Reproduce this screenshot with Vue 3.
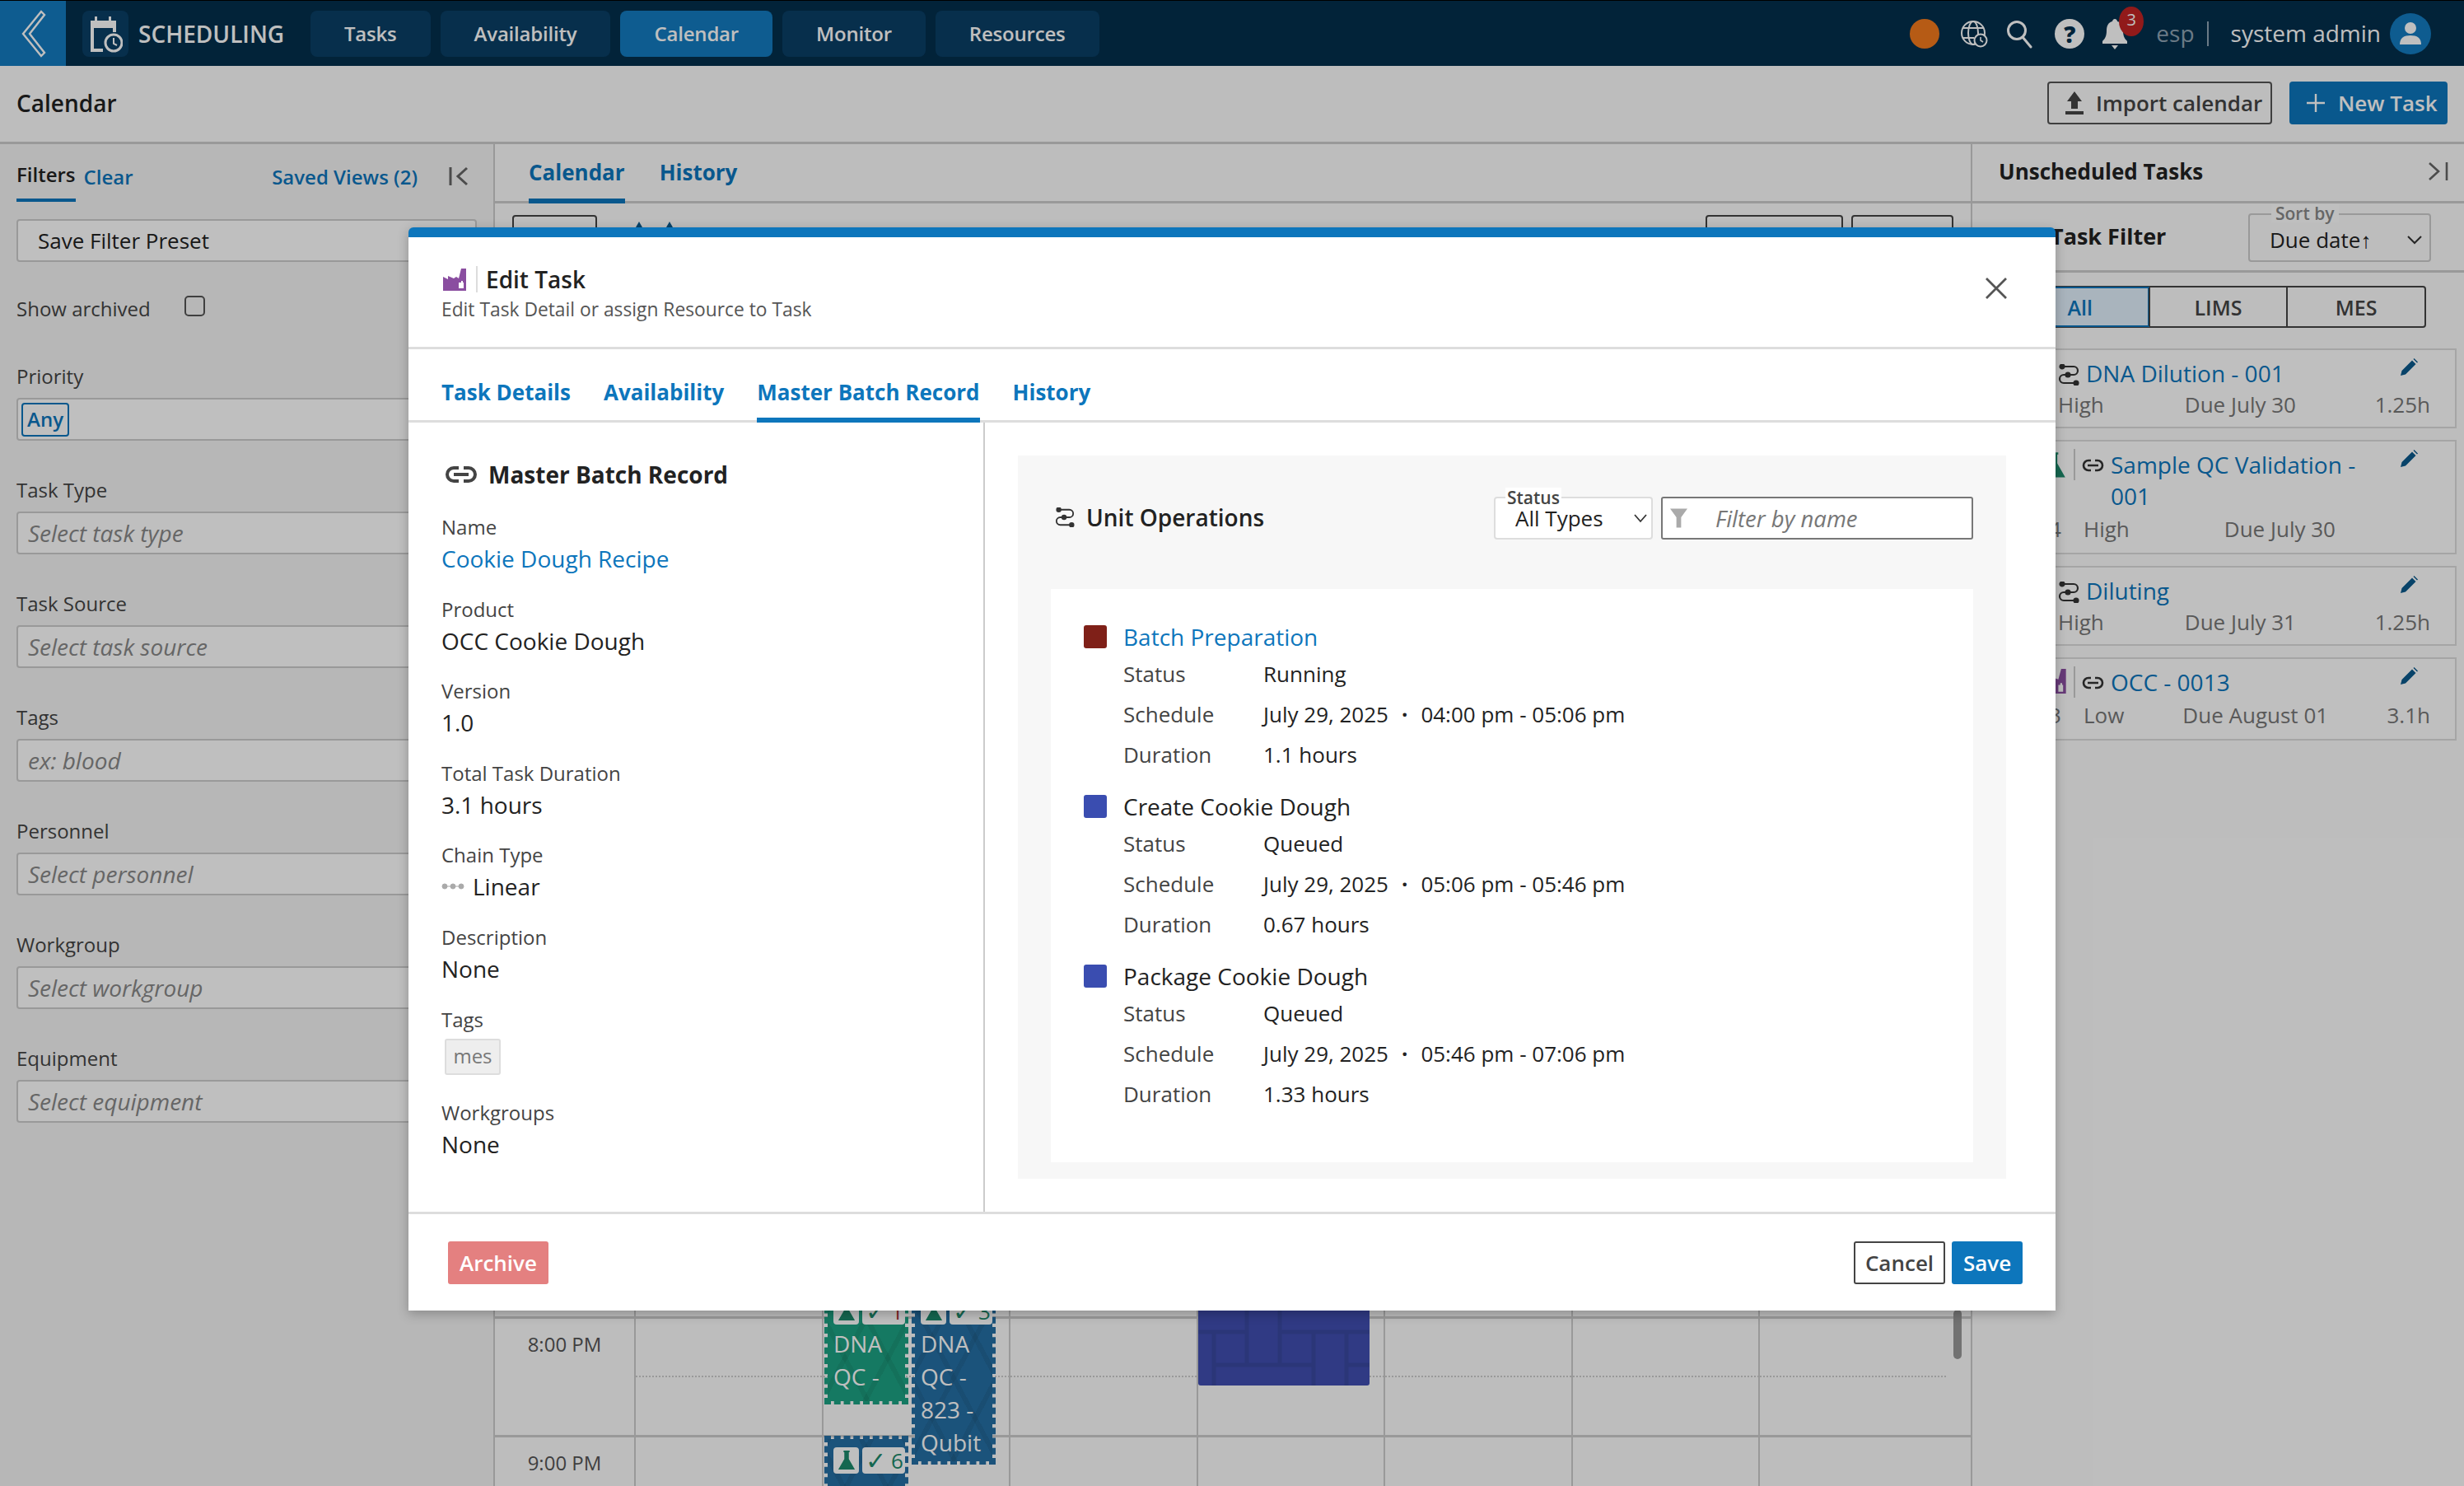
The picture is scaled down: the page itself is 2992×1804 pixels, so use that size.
<template>
  <div class="page">
    <!-- Top bar -->
    <header class="topbar">
      <div class="back">
        <svg width="32" height="58" viewBox="0 0 32 58" fill="none" stroke="#fff" stroke-width="2.4"><path d="M26 2 L4 29 L26 56 L30 52 L12 29 L30 6 Z" /></svg>
      </div>
      <div class="app-tile">
        <svg width="42" height="46" viewBox="0 0 42 46"><path fill="#fff" d="M3 7h5V2h3v5h14V2h3v5h6v14h-4v-5H7v25h11v4H3z" /><circle cx="31" cy="34" r="10" fill="none" stroke="#fff" stroke-width="3" /><path d="M31 28v7l4 2" fill="none" stroke="#fff" stroke-width="2" /></svg>
      </div>
      <div class="app-name">SCHEDULING</div>
      <nav class="nav">
        <div v-for="n in navItems" :key="n" class="nav-item" :class="{ active: n === 'Calendar' }">{{ n }}</div>
      </nav>
      <div class="top-right">
        <span class="status-dot" />
        <svg class="ti" width="34" height="36" viewBox="0 0 34 36" fill="none" stroke="#fff" stroke-width="2"><circle cx="16" cy="17" r="14" /><ellipse cx="16" cy="17" rx="6" ry="14" /><path d="M3 11h26M3 23h14" /><circle cx="25" cy="26" r="7.5" fill="#032f4d" /><path d="M25 22v4l3 2" stroke-width="1.6" /></svg>
        <svg class="ti search" width="34" height="36" viewBox="0 0 34 36" fill="none" stroke="#fff" stroke-width="3"><circle cx="14" cy="14" r="10.5" /><path d="M21 22l10 12" stroke-linecap="round" /></svg>
        <span class="help">?</span>
        <div class="bell">
          <svg width="34" height="38" viewBox="0 0 34 38" fill="#fff"><path d="M17 1c2 0 3 2 3 3 5 1 7 6 7 11 0 7 2 10 5 13v3H2v-3c3-3 5-6 5-13 0-5 2-10 7-11 0-1 1-3 3-3z" /><path d="M13 33h8l-4 5z" /></svg>
          <span class="badge">3</span>
        </div>
        <span class="lang">esp</span>
        <span class="sep" />
        <span class="user">system admin</span>
        <span class="avatar">
          <svg width="28" height="30" viewBox="0 0 28 30" fill="#fff"><circle cx="14" cy="8" r="7" /><path d="M1 28c0-8 5-11 13-11s13 3 13 11z" /></svg>
        </span>
      </div>
    </header>

    <!-- Page title row -->
    <div class="subhead">
      <div class="page-title">Calendar</div>
      <div class="sub-actions">
        <button class="btn-outline">
          <svg width="24" height="30" viewBox="0 0 24 30" fill="#444"><path d="M12 1l9 12h-5v9H8v-9H3z" /><path d="M1 25h22v4H1z" /></svg>
          Import calendar
        </button>
        <button class="btn-primary">
          <svg width="24" height="24" viewBox="0 0 24 24" stroke="#fff" stroke-width="2.4"><path d="M12 1v22M1 12h22" /></svg>
          New Task
        </button>
      </div>
    </div>

    <div class="main">
      <!-- Filters -->
      <aside class="filters">
        <div class="filters-head">
          <span class="f-title">Filters</span>
          <span class="link f-clear">Clear</span>
          <span class="link f-saved">Saved Views (2)</span>
          <svg width="24" height="24" viewBox="0 0 24 24" fill="none" stroke="#666" stroke-width="3"><path d="M2 1v22M22 2L11 12l11 10" /></svg>
        </div>
        <div class="input preset">Save Filter Preset</div>
        <div class="archived">
          <span>Show archived</span>
          <span class="checkbox" />
        </div>
        <div class="f-label first">Priority</div>
        <div class="input tagbox"><span class="any">Any</span></div>
        <template v-for="f in filterFields" :key="f.label">
          <div class="f-label">{{ f.label }}</div>
          <div class="input ph">{{ f.ph }}</div>
        </template>
      </aside>

      <!-- Calendar -->
      <section class="center">
        <div class="tabs-row">
          <div class="c-tab on">Calendar</div>
          <div class="c-tab">History</div>
        </div>
        <div class="cal-toolbar">
          <span class="tb-btn today" />
          <span class="tb-arrows">
            <svg width="16" height="14" viewBox="0 0 16 14" fill="#0b5a8d"><path d="M8 0l8 14H0z" /></svg>
            <svg width="16" height="14" viewBox="0 0 16 14" fill="#0b5a8d"><path d="M8 0l8 14H0z" /></svg>
          </span>
          <span class="tb-spacer" />
          <span class="tb-btn wide" />
          <span class="tb-btn mid" />
        </div>
        <div class="cal-body">
          <div v-for="(h, i) in hours" :key="h" class="hour-row" :class="{ short: i === hours.length - 1 }">
            <div class="hour-label">{{ h }}</div>
            <div v-for="c in 7" :key="c" class="hour-cell" />
          </div>
          <!-- events lie over the grid -->
          <div v-for="ev in events" :key="ev.id" class="event" :class="ev.cls" :style="{ left: ev.left + 'px', bottom: ev.bottom + 'px', height: ev.height + 'px' }">
            <div class="chips">
              <span class="chip small"><svg width="22" height="26" viewBox="0 0 24 28" fill="#1c8a6b"><path d="M8 1h8v2h-1v9l8 14H1l8-14V3H8z" /></svg></span>
              <span class="chip grow"><i class="ok">✓</i><i class="ok-num" :class="{ red: ev.red }">{{ ev.num }}</i></span>
            </div>
            <div class="ev-text"><div v-for="l in ev.lines" :key="l">{{ l }}</div></div>
          </div>
          <div class="block">
            <svg width="208" height="92" viewBox="0 0 208 92" fill="none" stroke="#3a48a0" stroke-width="5"><path d="M0 27h59M99 27h109M19 67h121M180 67h28" /><path d="M59 0v67M99 0v67M19 27v65M140 27v65M180 27v65" /></svg>
          </div>
          <div class="scrollbar" />
        </div>
      </section>

      <!-- Unscheduled -->
      <aside class="unsched">
        <div class="u-head">
          <span>Unscheduled Tasks</span>
          <svg width="26" height="24" viewBox="0 0 26 24" fill="none" stroke="#666" stroke-width="2.6"><path d="M3 2l11 10L3 22M24 1v22" /></svg>
        </div>
        <div class="u-filter">
          <span class="u-filter-title">Task Filter</span>
          <div class="sort">
            <span class="sort-label">Sort by</span>
            <span>Due date↑</span>
            <svg width="20" height="12" viewBox="0 0 20 12" fill="none" stroke="#333" stroke-width="2"><path d="M2 2l8 8 8-8" /></svg>
          </div>
        </div>
        <div class="seg">
          <span class="seg-item on">All</span>
          <span class="seg-item">LIMS</span>
          <span class="seg-item">MES</span>
        </div>
        <div class="cards">
          <div class="u-card plain">
            <div class="u-top">
              <svg class="ops" width="26" height="26" viewBox="0 0 26 26" fill="none" stroke="#333" stroke-width="2.2"><path d="M6 3h13a4.5 4.5 0 0 1 0 10H7a4.5 4.5 0 0 0 0 10h13" /><circle cx="5" cy="3" r="2.5" fill="#333" /><circle cx="12" cy="13" r="2.5" fill="#333" /><circle cx="22" cy="23" r="2.5" fill="#333" /></svg>
              <span class="u-name">DNA Dilution - 001</span>
            </div>
            <div class="u-meta"><span>High</span><span class="due">Due July 30</span><span class="hrs">1.25h</span></div>
            <svg class="pencil" width="22" height="22" viewBox="0 0 22 22" fill="#0b5a8d"><path d="M1 21l1.5-6L15 2.5l4.5 4.5L7 19.5zM16.5 1l1-1 4.5 4.5-1 1z" /></svg>
          </div>
          <div class="u-card lead c2">
            <div class="u-top">
              <svg class="lead-ico" width="29" height="34" viewBox="0 0 24 28" fill="#1c8a6b"><path d="M8 1h8v2h-1v9l8 14H1l8-14V3H8z" /></svg>
              <span class="vbar" />
              <svg class="chain" width="27" height="16" viewBox="0 0 27 16" fill="none" stroke="#333" stroke-width="2.6"><path d="M11 2H8a6 6 0 0 0 0 12h3M16 2h3a6 6 0 0 1 0 12h-3M7 8h13" /></svg>
              <span class="u-name">Sample QC Validation -<br />001</span>
            </div>
            <div class="u-meta"><span class="u-num">4</span><span>High</span><span class="due due2">Due July 30</span></div>
            <svg class="pencil" width="22" height="22" viewBox="0 0 22 22" fill="#0b5a8d"><path d="M1 21l1.5-6L15 2.5l4.5 4.5L7 19.5zM16.5 1l1-1 4.5 4.5-1 1z" /></svg>
          </div>
          <div class="u-card plain">
            <div class="u-top">
              <svg class="ops" width="26" height="26" viewBox="0 0 26 26" fill="none" stroke="#333" stroke-width="2.2"><path d="M6 3h13a4.5 4.5 0 0 1 0 10H7a4.5 4.5 0 0 0 0 10h13" /><circle cx="5" cy="3" r="2.5" fill="#333" /><circle cx="12" cy="13" r="2.5" fill="#333" /><circle cx="22" cy="23" r="2.5" fill="#333" /></svg>
              <span class="u-name">Diluting</span>
            </div>
            <div class="u-meta"><span>High</span><span class="due">Due July 31</span><span class="hrs">1.25h</span></div>
            <svg class="pencil" width="22" height="22" viewBox="0 0 22 22" fill="#0b5a8d"><path d="M1 21l1.5-6L15 2.5l4.5 4.5L7 19.5zM16.5 1l1-1 4.5 4.5-1 1z" /></svg>
          </div>
          <div class="u-card lead c4">
            <div class="u-top">
              <svg class="lead-ico" width="33" height="30" viewBox="0 0 28 26"><path fill="#8a4ea0" d="M0 26V9l6 3V8l6 3 2-2 6 2 3-11h5v26z" /><path fill="#fff" d="M20 17h2v-2h2v2h1v7h-5z" /></svg>
              <span class="vbar" />
              <svg class="chain" width="27" height="16" viewBox="0 0 27 16" fill="none" stroke="#333" stroke-width="2.6"><path d="M11 2H8a6 6 0 0 0 0 12h3M16 2h3a6 6 0 0 1 0 12h-3M7 8h13" /></svg>
              <span class="u-name">OCC - 0013</span>
            </div>
            <div class="u-meta"><span class="u-num">3</span><span>Low</span><span class="due due3">Due August 01</span><span class="hrs">3.1h</span></div>
            <svg class="pencil" width="22" height="22" viewBox="0 0 22 22" fill="#0b5a8d"><path d="M1 21l1.5-6L15 2.5l4.5 4.5L7 19.5zM16.5 1l1-1 4.5 4.5-1 1z" /></svg>
          </div>
        </div>
      </aside>
    </div>

    <!-- Dialog -->
    <div class="scrim" />
    <div class="modal">
      <div class="m-head">
        <div class="m-title-row">
          <svg width="28" height="27" viewBox="0 0 28 27"><path fill="#8a4ea0" d="M0 27V10l6 3V9l7 3 3-2 3 2 3-12h6v27z" /><path fill="#fff" d="M19 17h3v-2h2v2h1v7h-6z" /></svg>
          <span class="m-vbar" />
          <span class="m-title">Edit Task</span>
        </div>
        <div class="m-sub">Edit Task Detail or assign Resource to Task</div>
        <svg class="m-close" width="26" height="26" viewBox="0 0 26 26" stroke="#555" stroke-width="2.8"><path d="M1 1l24 24M25 1L1 25" /></svg>
      </div>
      <div class="m-tabs">
        <div v-for="t in modalTabs" :key="t" class="m-tab" :class="{ on: t === 'Master Batch Record' }">{{ t }}</div>
      </div>
      <div class="m-body">
        <div class="m-left">
          <div class="ml-title">
            <svg width="40" height="22" viewBox="0 0 40 22" fill="none" stroke="#444" stroke-width="4"><path d="M17 3H11a8 8 0 0 0 0 16h6M23 3h6a8 8 0 0 1 0 16h-6M11 11h18" /></svg>
            <span>Master Batch Record</span>
          </div>
          <div class="fld"><div class="fl">Name</div><div class="fv link-strong">Cookie Dough Recipe</div></div>
          <div class="fld"><div class="fl">Product</div><div class="fv">OCC Cookie Dough</div></div>
          <div class="fld"><div class="fl">Version</div><div class="fv">1.0</div></div>
          <div class="fld"><div class="fl">Total Task Duration</div><div class="fv">3.1 hours</div></div>
          <div class="fld">
            <div class="fl">Chain Type</div>
            <div class="fv linear">
              <svg width="28" height="10" viewBox="0 0 28 10" fill="#aaa" stroke="#aaa"><circle cx="4" cy="5" r="3" /><circle cx="14" cy="5" r="3" /><circle cx="24" cy="5" r="3" /><path d="M4 5h20" /></svg>
              Linear
            </div>
          </div>
          <div class="fld"><div class="fl">Description</div><div class="fv">None</div></div>
          <div class="fld tags"><div class="fl">Tags</div><div class="tag">mes</div></div>
          <div class="fld"><div class="fl">Workgroups</div><div class="fv">None</div></div>
        </div>
        <div class="m-right">
          <div class="uo-panel">
            <div class="uo-head">
              <svg class="uo-ico" width="24" height="24" viewBox="0 0 26 26" fill="none" stroke="#333" stroke-width="2"><path d="M6 3h13a4.5 4.5 0 0 1 0 10H7a4.5 4.5 0 0 0 0 10h13" /><circle cx="5" cy="3" r="2.5" fill="#333" /><circle cx="12" cy="13" r="2.5" fill="#333" /><circle cx="22" cy="23" r="2.5" fill="#333" /></svg>
              <span class="uo-title">Unit Operations</span>
              <div class="uo-select">
                <span class="uo-select-label">Status</span>
                <span>All Types</span>
                <svg width="18" height="12" viewBox="0 0 18 12" fill="none" stroke="#333" stroke-width="1.8"><path d="M2 2l7 8 7-8" /></svg>
              </div>
              <div class="uo-filter">
                <svg width="21" height="26" viewBox="0 0 22 26" fill="#aaa"><path d="M0 1h22l-8 11v13h-6V12z" /></svg>
                <span>Filter by name</span>
              </div>
            </div>
            <div class="uo-card">
              <div v-for="op in operations" :key="op.name" class="op">
                <div class="op-name">
                  <span class="op-sq" :style="{ background: op.color }" />
                  <span :class="{ 'link-strong': op.link }">{{ op.name }}</span>
                </div>
                <div class="op-row"><span class="op-k">Status</span><span>{{ op.status }}</span></div>
                <div class="op-row">
                  <span class="op-k">Schedule</span>
                  <span>July 29, 2025<i class="op-dot">·</i>{{ op.time }}</span>
                </div>
                <div class="op-row"><span class="op-k">Duration</span><span>{{ op.duration }}</span></div>
              </div>
            </div>
          </div>
        </div>
      </div>
      <div class="m-foot">
        <button class="m-archive">Archive</button>
        <div class="m-foot-right">
          <button class="m-cancel">Cancel</button>
          <button class="m-save">Save</button>
        </div>
      </div>
    </div>
  </div>
</template>

<script setup>
const navItems = ['Tasks', 'Availability', 'Calendar', 'Monitor', 'Resources']

const filterFields = [
  { label: 'Task Type', ph: 'Select task type' },
  { label: 'Task Source', ph: 'Select task source' },
  { label: 'Tags', ph: 'ex: blood' },
  { label: 'Personnel', ph: 'Select personnel' },
  { label: 'Workgroup', ph: 'Select workgroup' },
  { label: 'Equipment', ph: 'Select equipment' },
]

const hours = ['1:00 PM', '2:00 PM', '3:00 PM', '4:00 PM', '5:00 PM', '6:00 PM', '7:00 PM', '8:00 PM', '9:00 PM']

const events = [
  { id: 1, cls: 'green', left: 400, bottom: 99, height: 143, num: '1', red: true, lines: ['DNA', 'QC -'] },
  { id: 2, cls: 'navy', left: 506, bottom: 26, height: 216, num: '3', lines: ['DNA', 'QC -', '823 -', 'Qubit'] },
  { id: 3, cls: 'navy', left: 400, bottom: -60, height: 121, num: '6', lines: [] },
]

const modalTabs = ['Task Details', 'Availability', 'Master Batch Record', 'History']

const operations = [
  { name: 'Batch Preparation', color: '#7f2018', link: true, status: 'Running', time: '04:00 pm - 05:06 pm', duration: '1.1 hours' },
  { name: 'Create Cookie Dough', color: '#3a4db0', status: 'Queued', time: '05:06 pm - 05:46 pm', duration: '0.67 hours' },
  { name: 'Package Cookie Dough', color: '#3a4db0', status: 'Queued', time: '05:46 pm - 07:06 pm', duration: '1.33 hours' },
]
</script>

<style>
html, body { margin: 0; background: #fff; }
</style>

<style scoped>
.page {
  position: relative;
  width: 2992px;
  height: 1804px;
  overflow: hidden;
  display: flex;
  flex-direction: column;
  font-family: 'Open Sans', sans-serif;
  color: #222;
  background: #fdfdfd;
}

button { font-family: inherit; }

.link { color: #0d76bc; }
.link-strong { color: #0d76bc; }

/* ── Top bar ───── */
.topbar {
  height: 80px;
  flex-shrink: 0;
  display: flex;
  align-items: center;
  background: #032f4d;
  color: #fff;
  border-top: 1px solid #000;
  box-sizing: border-box;
}
.back {
  width: 80px;
  height: 79px;
  display: flex;
  align-items: center;
  justify-content: center;
  background: #137bc0;
}
.app-tile {
  width: 56px;
  height: 56px;
  margin-left: 20px;
  border-radius: 8px;
  background: #0a3f66;
  display: flex;
  align-items: center;
  justify-content: center;
}
.app-name {
  margin-left: 12px;
  width: 209px;
  font-size: 28px;
  font-weight: 600;
}
.nav { display: flex; gap: 12px; }
.nav-item {
  height: 56px;
  padding: 0 41px;
  border-radius: 8px;
  background: #0a3f66;
  display: flex;
  align-items: center;
  font-size: 24px;
  font-weight: 600;
  letter-spacing: -0.2px;
}
.nav-item.active { background: #137bc0; }
.top-right {
  margin-left: auto;
  display: flex;
  align-items: center;
  padding-right: 40px;
}
.status-dot {
  width: 36px;
  height: 36px;
  border-radius: 50%;
  background: #f37a1c;
  margin-right: 25px;
}
.ti { margin-right: 21px; }
.ti.search { margin-right: 26px; }
.help {
  width: 36px;
  height: 36px;
  border-radius: 50%;
  background: #fff;
  color: #032f4d;
  font-weight: 800;
  font-size: 28px;
  line-height: 36px;
  text-align: center;
  margin-right: 20px;
}
.bell { position: relative; width: 34px; height: 38px; margin-right: 33px; }
.badge {
  position: absolute;
  left: 22px;
  top: -14px;
  width: 30px;
  height: 36px;
  border-radius: 50%;
  background: #c22323;
  color: #fff;
  font-size: 20px;
  line-height: 32px;
  text-align: center;
}
.lang { font-size: 28px; color: #8fa3b3; margin-top: -2px; }
.sep { width: 2px; height: 30px; background: #8fa3b3; margin: 0 27px 0 15px; }
.user { font-size: 28px; margin-right: 11px; margin-top: -2px; }
.avatar {
  width: 50px;
  height: 50px;
  border-radius: 50%;
  background: #137bc0;
  display: flex;
  align-items: center;
  justify-content: center;
}

/* ── Title row ─── */
.subhead {
  height: 95px;
  flex-shrink: 0;
  box-sizing: border-box;
  display: flex;
  align-items: center;
  justify-content: space-between;
  padding: 0 20px;
  border-bottom: 3px solid #ccc;
}
.page-title { font-size: 28px; font-weight: 600; margin-top: -3px; }
.sub-actions { display: flex; gap: 21px; margin-top: -2px; }
.btn-outline, .btn-primary {
  height: 52px;
  border-radius: 4px;
  font-size: 26px;
  display: flex;
  align-items: center;
  box-sizing: border-box;
  white-space: nowrap;
}
.btn-outline {
  width: 273px;
  padding: 0 0 0 19px;
  gap: 14px;
  border: 2.5px solid #555;
  background: transparent;
  color: #444;
  font-weight: 600;
}
.btn-primary {
  width: 192px;
  padding: 0 0 0 20px;
  gap: 15px;
  border: none;
  background: #0d76bc;
  color: #fff;
  font-weight: 600;
}

.main { flex: 1; min-height: 0; display: flex; }

/* ── Filters ───── */
.filters {
  width: 601px;
  flex-shrink: 0;
  box-sizing: border-box;
  padding: 0 20px;
  background: #f5f5f5;
  border-right: 2px solid #ccc;
  font-size: 24px;
}
.filters-head {
  height: 72px;
  display: flex;
  align-items: center;
  padding: 6px 10px 0 0;
  box-sizing: border-box;
}
.f-title {
  font-weight: 600;
  align-self: stretch;
  display: flex;
  align-items: center;
  border-bottom: 4px solid #0d76bc;
  margin-bottom: 2px;
}
.f-clear { margin-left: 10px; font-weight: 600; }
.f-saved { margin-left: auto; margin-right: 38px; font-weight: 600; }
.input {
  height: 52px;
  box-sizing: border-box;
  border: 2.5px solid #ccc;
  border-radius: 4px;
  display: flex;
  align-items: center;
  background: #fff;
}
.preset { margin-top: 19px; padding-left: 24px; font-size: 26px; }
.archived {
  margin-top: 41px;
  display: flex;
  align-items: center;
  gap: 41px;
  color: #444;
  height: 30px;
}
.checkbox {
  width: 25px;
  height: 25px;
  border: 2.5px solid #555;
  border-radius: 5px;
  box-sizing: border-box;
  margin-top: -6px;
}
.f-label { margin-top: 41px; height: 45px; line-height: 37px; color: #444; }
.f-label.first { margin-top: 49px; }
.ph { font-style: italic; color: #888; padding-left: 12px; font-size: 28px; }
.tagbox { padding-left: 4px; }
.any {
  border: 2.5px solid #0d76bc;
  border-radius: 4px;
  color: #0d76bc;
  font-weight: 600;
  height: 41px;
  width: 58px;
  box-sizing: border-box;
  text-align: center;
  line-height: 36px;
}

/* ── Calendar ──── */
.center { flex: 1; min-width: 0; display: flex; flex-direction: column; }
.tabs-row {
  height: 72px;
  flex-shrink: 0;
  box-sizing: border-box;
  display: flex;
  gap: 42px;
  padding-left: 41px;
  border-bottom: 3px solid #ccc;
}
.c-tab {
  height: 72px;
  box-sizing: border-box;
  line-height: 68px;
  font-size: 26px;
  font-weight: 700;
  color: #0d76bc;
}
.c-tab.on { border-bottom: 6px solid #0d76bc; }
.cal-toolbar {
  height: 60px;
  flex-shrink: 0;
  display: flex;
  gap: 10px;
  padding: 14px 21px 0;
  box-sizing: border-box;
}
.tb-btn {
  height: 52px;
  box-sizing: border-box;
  border: 2.5px solid #444;
  border-radius: 4px;
}
.today { width: 103px; }
.tb-arrows { display: flex; gap: 21px; margin-left: 33px; align-items: flex-start; padding-top: 8px; }
.tb-spacer { flex: 1; }
.wide { width: 167px; }
.mid { width: 124px; }
.cal-body {
  flex: 1;
  min-height: 0;
  position: relative;
  display: flex;
  flex-direction: column;
  justify-content: flex-end;
}
.hour-row {
  display: grid;
  grid-template-columns: 169px repeat(7, 227.5px);
  height: 144px;
  flex-shrink: 0;
  box-sizing: border-box;
  border-top: 3px solid #ccc;
}
.hour-row.short { height: 62px; }
.hour-label {
  font-size: 24px;
  color: #555;
  text-align: center;
  padding-top: 15px;
  line-height: 32px;
}
.hour-cell {
  border-left: 2px solid #ccc;
  background-image: linear-gradient(90deg, #ccc 50%, transparent 50%);
  background-size: 4px 2px;
  background-repeat: repeat-x;
  background-position: 0 69px;
}

.event {
  position: absolute;
  width: 102px;
  box-sizing: border-box;
  color: #fff;
  border: 4px dashed;
  background-clip: padding-box;
  overflow: hidden;
}
.event.green {
  border-color: #1da283;
  background-color: #1da283;
  background-image:
    repeating-linear-gradient(62deg, transparent 0 40px, rgba(0, 0, 0, 0.07) 40px 46px),
    repeating-linear-gradient(-62deg, transparent 0 40px, rgba(0, 0, 0, 0.07) 40px 46px);
}
.event.navy {
  border-color: #256fa4;
  background-color: #256fa4;
  background-image:
    repeating-linear-gradient(62deg, transparent 0 40px, rgba(0, 0, 0, 0.07) 40px 46px),
    repeating-linear-gradient(-62deg, transparent 0 40px, rgba(0, 0, 0, 0.07) 40px 46px);
}
.chips { display: flex; gap: 4px; padding: 10px 0 0 7px; box-sizing: border-box; }
.chip {
  background: #fff;
  border-radius: 4px;
  height: 32px;
  display: flex;
  align-items: center;
  justify-content: center;
  overflow: hidden;
}
.chip.small { width: 31px; flex-shrink: 0; }
.chip.grow { flex: 1; min-width: 0; justify-content: flex-start; padding-left: 4px; gap: 6px; }
.ok { color: #1c8a6b; font-style: normal; font-size: 30px; line-height: 32px; }
.ok-num { color: #1c8a6b; font-style: normal; font-size: 26px; line-height: 32px; }
.ok-num.red { color: #a33; }
.ev-text {
  padding: 3px 0 0 7px;
  font-size: 28px;
  line-height: 40px;
  white-space: nowrap;
}
.block {
  position: absolute;
  left: 854px;
  bottom: 122px;
  width: 208px;
  height: 92px;
  background: #404eb1;
  border-radius: 0 0 3px 3px;
  overflow: hidden;
}
.block svg { display: block; }
.scrollbar {
  position: absolute;
  right: 11px;
  bottom: 154px;
  width: 10px;
  height: 60px;
  border-radius: 5px;
  background: #999;
}

/* ── Unscheduled ──*/
.unsched {
  width: 599px;
  flex-shrink: 0;
  box-sizing: border-box;
  border-left: 2px solid #ccc;
  display: flex;
  flex-direction: column;
}
.u-head {
  height: 72px;
  flex-shrink: 0;
  box-sizing: border-box;
  display: flex;
  align-items: center;
  justify-content: space-between;
  padding: 0 19px 4px 32px;
  border-bottom: 3px solid #ccc;
  font-size: 26px;
  font-weight: 700;
}
.u-filter {
  height: 84px;
  flex-shrink: 0;
  box-sizing: border-box;
  border-bottom: 3px solid #ccc;
  display: flex;
  align-items: center;
  justify-content: space-between;
  padding: 0 40px 0 95px;
}
.u-filter-title { font-size: 27px; font-weight: 700; margin-top: -2px; }
.sort {
  position: relative;
  width: 222px;
  height: 59px;
  box-sizing: border-box;
  border: 2.5px solid #ccc;
  border-radius: 4px;
  display: flex;
  align-items: center;
  justify-content: space-between;
  padding: 4px 8px 0 24px;
  font-size: 26px;
  margin-top: 2px;
}
.sort-label {
  position: absolute;
  left: 26px;
  top: -13px;
  padding: 0 5px;
  font-size: 21px;
  line-height: 22px;
  font-weight: 600;
  color: #888;
  background: #fff;
}
.seg {
  margin: 16px 46px 0 46px;
  height: 51px;
  display: flex;
  flex-shrink: 0;
  box-sizing: border-box;
  border: 2.5px solid #444;
  border-radius: 4px;
}
.seg-item {
  flex: 1;
  display: flex;
  align-items: center;
  justify-content: center;
  font-size: 25px;
  font-weight: 600;
  color: #444;
  border-left: 2px solid #444;
}
.seg-item:first-child { border-left: none; }
.seg-item.on {
  background: #e2f1fc;
  color: #0d76bc;
  outline: 2.5px solid #0d76bc;
  outline-offset: -1px;
}
.cards {
  margin-top: 25px;
  margin-left: 17px;
  margin-right: 9px;
  display: flex;
  flex-direction: column;
  gap: 14px;
}
.u-card {
  position: relative;
  box-sizing: border-box;
  border: 2.5px solid #ddd;
  background: #fff;
  padding: 9px 30px 8px 85px;
}
.u-card.lead { padding-left: 66px; }
.u-card.c2 { padding-bottom: 10px; }
.u-card.c2 .u-meta { margin-top: 2px; }
.u-card.c4 .u-meta { margin-top: 2px; }
.u-card.c4 { padding-bottom: 10px; }
.u-card.c4 .lead-ico { margin-left: -4px; }
.u-top { display: flex; align-items: flex-start; }
.ops { margin-right: 8px; margin-top: 8px; flex-shrink: 0; }
.lead-ico { margin-top: 3px; flex-shrink: 0; }
.vbar { width: 2px; height: 38px; background: #ccc; margin: 0 8px 0 9px; flex-shrink: 0; }
.chain { margin-top: 12px; margin-right: 8px; flex-shrink: 0; }
.u-name {
  font-size: 28px;
  line-height: 38px;
  color: #0d76bc;
  white-space: nowrap;
}
.u-meta {
  display: flex;
  align-items: center;
  font-size: 26px;
  line-height: 38px;
  color: #777;
}
.u-num { width: 50px; padding-left: 8px; box-sizing: border-box; }
.due { margin-left: 98px; }
.due2 { margin-left: 115px; }
.due3 { margin-left: 71px; }
.hrs { margin-left: auto; }
.pencil { position: absolute; right: 45px; top: 10px; }

/* ── Dialog ────── */
.scrim {
  position: absolute;
  inset: 0;
  background: rgba(0, 0, 0, 0.25);
}
.modal {
  position: absolute;
  left: 496px;
  top: 276px;
  width: 2000px;
  height: 1315px;
  box-sizing: border-box;
  border-top: 12px solid #0d76bc;
  border-radius: 6px 6px 0 0;
  background: #fff;
  display: flex;
  flex-direction: column;
  box-shadow: 0 4px 14px rgba(0, 0, 0, 0.25);
}
.m-head {
  position: relative;
  height: 136px;
  flex-shrink: 0;
  box-sizing: border-box;
  padding: 32px 0 0 40px;
  border-bottom: 3px solid #ddd;
}
.m-title-row { display: flex; align-items: center; height: 38px; padding-left: 2px; }
.m-vbar { width: 2px; height: 32px; background: #ddd; margin: 0 10px 0 12px; }
.m-title { font-size: 28px; font-weight: 600; color: #222; }
.m-sub { margin-top: 2px; font-size: 22.8px; font-weight: 500; color: #555; }
.m-close { position: absolute; right: 59px; top: 49px; }
.m-tabs {
  height: 89px;
  flex-shrink: 0;
  box-sizing: border-box;
  display: flex;
  gap: 40px;
  padding-left: 40px;
  border-bottom: 3px solid #ddd;
}
.m-tab {
  height: 89px;
  box-sizing: border-box;
  padding-top: 33px;
  font-size: 26px;
  line-height: 38px;
  font-weight: 700;
  color: #0d76bc;
}
.m-tab.on { border-bottom: 6px solid #0d76bc; }
.m-body { flex: 1; min-height: 0; display: flex; }
.m-left {
  width: 700px;
  flex-shrink: 0;
  box-sizing: border-box;
  padding: 43px 0 0 40px;
  border-right: 2px solid #ccc;
}
.ml-title {
  display: flex;
  align-items: center;
  gap: 13px;
  font-size: 28px;
  font-weight: 700;
  padding-left: 4px;
  height: 40px;
  margin-bottom: 27px;
}
.fld { margin-bottom: 23.6px; }
.fld.tags { margin-bottom: 29px; }
.fl { font-size: 24px; line-height: 34px; color: #444; }
.fv { font-size: 28px; line-height: 42px; color: #222; }
.fv.link-strong { color: #0d76bc; }
.linear { display: flex; align-items: center; gap: 10px; }
.tag {
  margin: 6px 0 0 4px;
  width: 68px;
  height: 44px;
  box-sizing: border-box;
  border: 2px solid #ddd;
  border-radius: 3px;
  background: #eee;
  color: #777;
  font-size: 24px;
  line-height: 38px;
  text-align: center;
}
.m-right { flex: 1; min-width: 0; padding: 40px 60px 40px 40px; }
.uo-panel {
  height: 100%;
  box-sizing: border-box;
  background: #f7f7f7;
  padding: 50px 40px 20px;
  display: flex;
  flex-direction: column;
}
.uo-head { display: flex; align-items: center; height: 52px; flex-shrink: 0; margin-left: 5px; }
.uo-ico { margin-top: -2px; }
.uo-title { margin-left: 14px; margin-top: -2px; font-size: 28px; font-weight: 600; }
.uo-select {
  position: relative;
  margin-left: auto;
  width: 193px;
  height: 52px;
  box-sizing: border-box;
  border: 2.5px solid #ddd;
  border-radius: 4px;
  background: #fff;
  display: flex;
  align-items: center;
  justify-content: space-between;
  padding: 0 4px 0 24px;
  font-size: 26px;
}
.uo-select-label {
  position: absolute;
  left: 12px;
  top: -13px;
  padding: 0 2px;
  background: #fff;
  font-size: 21px;
  line-height: 24px;
  font-weight: 600;
  color: #444;
}
.uo-filter {
  margin-left: 10px;
  width: 379px;
  height: 52px;
  box-sizing: border-box;
  border: 2.5px solid #777;
  border-radius: 3px;
  background: #fff;
  display: flex;
  align-items: center;
  gap: 34px;
  padding-left: 9px;
  font-size: 27.5px;
  font-style: italic;
  color: #777;
}
.uo-card {
  flex: 1;
  margin-top: 60px;
  background: #fff;
  padding: 38px 40px 0;
  box-sizing: border-box;
}
.op { height: 206px; }
.op-name {
  display: flex;
  align-items: center;
  gap: 20px;
  font-size: 28px;
  line-height: 40px;
  color: #222;
}
.op-sq { width: 28px; height: 28px; border-radius: 3px; }
.op-row {
  display: flex;
  height: 49px;
  align-items: center;
  padding-left: 48px;
  font-size: 26px;
  color: #222;
}
.op-k { width: 170px; color: #444; }
.op-dot { font-style: normal; margin: 0 16px; font-weight: 700; }
.m-foot {
  height: 120px;
  flex-shrink: 0;
  box-sizing: border-box;
  display: flex;
  align-items: center;
  justify-content: space-between;
  padding: 0 40px 0 48px;
  border-top: 3px solid #ddd;
}
.m-foot-right { display: flex; gap: 8px; }
.m-archive, .m-cancel, .m-save {
  height: 52px;
  border-radius: 3px;
  font-size: 26px;
  font-weight: 600;
  padding: 0;
}
.m-archive { width: 122px; border: none; background: #e48080; color: #fff; }
.m-cancel { width: 111px; border: 2.5px solid #444; background: #fff; color: #444; }
.m-save { width: 86px; border: none; background: #0d76bc; color: #fff; }
</style>
